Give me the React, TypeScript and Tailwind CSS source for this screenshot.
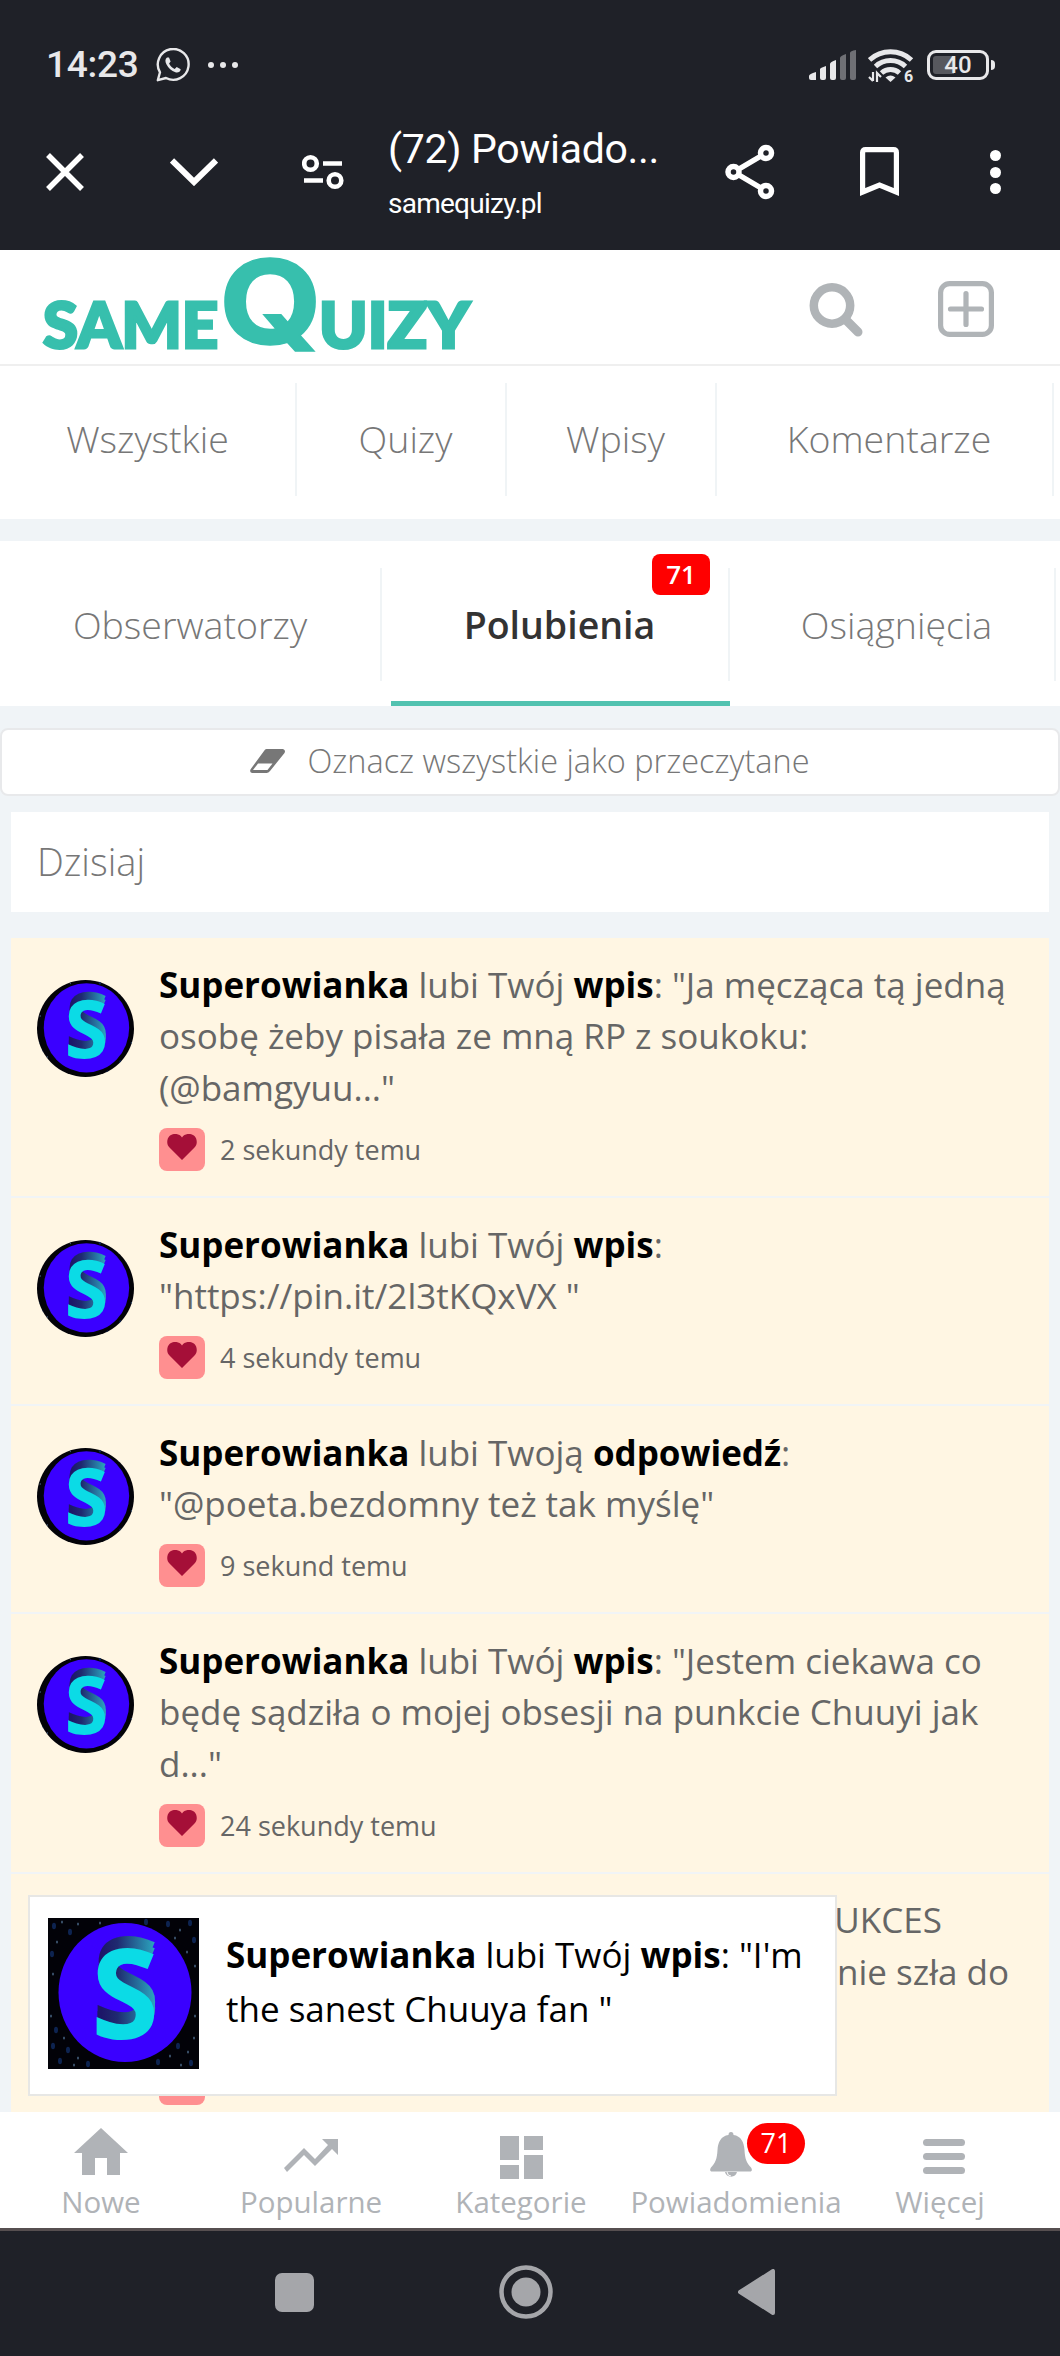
import { useId } from "react";
import type { ReactNode } from "react";

type Notification = {
    id: number;
    verb: string;
    target: string;
    lines: string[];
    time: string;
};

const notifications: Notification[] = [
    { id: 1, verb: "lubi Twój", target: "wpis", lines: ["\"Ja męcząca tą jedną", "osobę żeby pisała ze mną RP z soukoku:", "(@bamgyuu...\""], time: "2 sekundy temu" },
    { id: 2, verb: "lubi Twój", target: "wpis", lines: ["", "\"https://pin.it/2l3tKQxVX \""], time: "4 sekundy temu" },
    { id: 3, verb: "lubi Twoją", target: "odpowiedź", lines: ["", "\"@poeta.bezdomny też tak myślę\""], time: "9 sekund temu" },
    { id: 4, verb: "lubi Twój", target: "wpis", lines: ["\"Jestem ciekawa co", "będę sądziła o mojej obsesji na punkcie Chuuyi jak", "d...\""], time: "24 sekundy temu" },
];

// star field behind the avatar: x, y, size
const stars = [
    [6, 8, 2], [14, 4, 1], [22, 14, 2], [30, 6, 1], [9, 24, 1], [4, 36, 2], [120, 6, 2], [132, 12, 1], [142, 5, 2],
    [127, 20, 1], [146, 22, 2], [139, 34, 1], [147, 48, 1], [5, 56, 1], [3, 98, 1], [8, 112, 2], [16, 120, 1],
    [5, 128, 2], [20, 132, 2], [12, 143, 2], [30, 140, 1], [40, 146, 2], [26, 147, 1], [110, 144, 2], [122, 138, 1],
    [130, 128, 2], [140, 134, 1], [146, 120, 1], [143, 145, 2], [133, 147, 1], [147, 98, 1], [52, 5, 1], [98, 4, 2],
];

function Avatar({ className }: { className: string }) {
    const id = useId();
    return (
        <svg viewBox="0 0 151 151" className={className} fontFamily="Open Sans, sans-serif" fontWeight="700" fontSize="125">
            <defs>
                <linearGradient id={`${id}fade`} x1="0" x2="1" y1="0" y2="0">
                    <stop offset="0.1" stopColor="#1d1668" />
                    <stop offset="0.35" stopColor="#1f2a70" />
                    <stop offset="1" stopColor="#2cb4c8" />
                </linearGradient>
                <mask id={`${id}depth`}>
                    <text x="44" y="109" textLength="68" lengthAdjust="spacingAndGlyphs" fill="#fff">S</text>
                    <text x="44" y="115" textLength="68" lengthAdjust="spacingAndGlyphs" fill="#fff">S</text>
                </mask>
            </defs>
            <rect width="151" height="151" fill="#020208" />
            {stars.map(([x, y, r]) => (
                <ellipse key={`${x}-${y}`} cx={x} cy={y} rx={r} ry={r * 1.6} fill={r === 2 ? "#0d2350" : "#3d5570"} />
            ))}
            <ellipse cx="77" cy="74.5" rx="66.5" ry="69.5" fill="#3a00ff" />
            <rect x="47" y="10" width="64" height="110" fill={`url(#${id}fade)`} mask={`url(#${id}depth)`} />
            <text x="43" y="121" textLength="68" lengthAdjust="spacingAndGlyphs" fill="#0bdbe6">S</text>
        </svg>
    );
}

function StatusBar() {
    return (
        <div className="flex h-[130px] items-center pl-[46px] pr-[65px] text-[#e8e8ea]">
            <span className="font-['Roboto'] text-[37px] font-medium leading-[44px] tracking-[-0.3px]">14:23</span>
            <svg viewBox="0 0 34 34" className="ml-[18px] h-[34px] w-[34px]" fill="none" stroke="currentColor" strokeWidth="2.4">
                <path d="M1.8 32.2 4 24.3A15.4 15.4 0 1 1 10 30Z" strokeLinejoin="round" />
                <path d="M11 9.5c-2 1.5-2 4-.6 6.800 2 4 5 6.800 9 8 2.500.8 5-.4 5.300-3l-4-2.300-2 2c-2.500-1-4.500-3-5.600-5.500l1.500-2-1.600-4Z" fill="currentColor" stroke="none" />
            </svg>
            <div className="ml-[18px] flex gap-1.5">
                <i className="h-1.5 w-1.5 rounded-full bg-current" />
                <i className="h-1.5 w-1.5 rounded-full bg-current" />
                <i className="h-1.5 w-1.5 rounded-full bg-current" />
            </div>
            <svg viewBox="0 0 48 31" className="ml-auto h-[31px] w-[48px]" fill="currentColor">
                <path d="M0 26q0-2 7-4v8H2q-2 0-2-2Z" />
                <path d="M11 19q0-1 6-3v12q0 2-2 2h-2q-2 0-2-2Z" />
                <path d="M21 14q0-2 6-4v18q0 2-2 2h-2q-2 0-2-2Z" />
                <path d="M31 8q0-2 6-4v24q0 2-2 2h-2q-2 0-2-2Z" fill="#6f7075" />
                <path d="M41 3q0-2 6-3v28q0 2-2 2h-2q-2 0-2-2Z" fill="#6f7075" />
            </svg>
            <svg viewBox="0 0 46 36" className="ml-[11px] h-[36px] w-[46px]" fill="none" stroke="currentColor" strokeWidth="5">
                <path d="M1.500 13a31 31 0 0 1 42 0" />
                <path d="M7.500 19.500a22 22 0 0 1 30 0" />
                <path d="M13.500 26a13.500 13.500 0 0 1 18 0" />
                <path d="M17.500 30.500q5-4 10 0l-5 4.500Z" fill="currentColor" stroke="none" />
                <path d="M5 25v9M1 30l4 4M9 35v-9l4 4" strokeWidth="2.200" />
                <text x="36" y="35" fill="currentColor" stroke="none" fontFamily="Roboto" fontWeight="700" fontSize="16">6</text>
            </svg>
            <div className="ml-[13px] flex h-[30px] w-[62px] items-center justify-center rounded-[9px] border-[3px] border-current bg-[linear-gradient(90deg,#57585e_21px,transparent_21px)] bg-clip-content bg-origin-content p-[3px]">
                <span className="font-['Roboto'] text-[24px] font-medium leading-[20px]">40</span>
            </div>
            <i className="ml-0.5 h-[10px] w-1 rounded-r-sm bg-current" />
        </div>
    );
}

function BrowserBar() {
    return (
        <div className="flex h-[120px] pl-[46px] pr-[55px] text-white">
            <svg viewBox="0 0 38 38" className="mt-[23px] h-[38px] w-[38px]" fill="none" stroke="currentColor" strokeWidth="5.500">
                <path d="M2 2l34 34M36 2 2 36" />
            </svg>
            <svg viewBox="0 0 48 28" className="ml-[86px] mt-[28px] h-[28px] w-[48px]" fill="none" stroke="currentColor" strokeWidth="6">
                <path d="M2 2.500 24 24 46 2.500" />
            </svg>
            <svg viewBox="0 0 42 36" className="ml-[84px] mt-[24px] h-[36px] w-[42px]" fill="none" stroke="currentColor" strokeWidth="4.600">
                <circle cx="8.500" cy="9.500" r="6.300" />
                <circle cx="33" cy="26.500" r="6.300" />
                <path d="M21 9.500h19M2 26.500h19" />
            </svg>
            <div className="ml-[44px] flex w-[290px] flex-col whitespace-nowrap font-['Roboto']">
                <span className="mt-[-6px] text-[41px] leading-[50px] tracking-[-0.3px]">(72) Powiado...</span>
                <span className="mt-[12px] text-[28px] leading-[36px] tracking-[-0.75px]">samequizy.pl</span>
            </div>
            <svg viewBox="0 0 50 56" className="ml-[47px] mt-[14px] h-[56px] w-[50px]" fill="none" stroke="currentColor" strokeWidth="5.500">
                <circle cx="8.500" cy="28" r="5.500" />
                <circle cx="41" cy="9" r="5.500" />
                <circle cx="41" cy="47" r="5.500" />
                <path d="m14 25 22-13M14 31l22 13" />
            </svg>
            <svg viewBox="0 0 39 50" className="ml-[85px] mt-[17px] h-[50px] w-[39px]" fill="none" stroke="currentColor" strokeWidth="5.200">
                <path d="M2.600 45V5.500Q2.600 2.600 5.500 2.600h28q2.900 0 2.900 2.900V45L19.500 38Z" />
            </svg>
            <div className="ml-[91px] mt-[20px] flex flex-col gap-[5.500px]">
                <i className="h-[11px] w-[11px] rounded-full bg-white" />
                <i className="h-[11px] w-[11px] rounded-full bg-white" />
                <i className="h-[11px] w-[11px] rounded-full bg-white" />
            </div>
        </div>
    );
}

function SiteHeader() {
    return (
        <header className="flex h-[116px] border-b-2 border-[#efefef] bg-white">
            <svg viewBox="0 0 480 113" className="h-[113px] w-[480px] overflow-visible" fill="#37bfad" stroke="#37bfad" fontFamily="Lato, sans-serif" fontWeight="900">
                <text x="43" y="98" fontSize="62" strokeWidth="3" textLength="175" lengthAdjust="spacingAndGlyphs">SAME</text>
                <text x="219" y="94" fontSize="117" strokeWidth="1.500" fontFamily="Inter, sans-serif" fontWeight="700" textLength="103" lengthAdjust="spacingAndGlyphs">Q</text>
                <text x="319" y="98" fontSize="62" strokeWidth="3" textLength="151" lengthAdjust="spacingAndGlyphs">UIZY</text>
            </svg>
            <svg viewBox="0 0 54 54" className="ml-[329px] mt-[33px] h-[54px] w-[54px]" fill="none" stroke="#b0b4b7" strokeWidth="8.500">
                <circle cx="23" cy="22.500" r="18.200" />
                <path d="m37 37 12 12" strokeLinecap="round" strokeWidth="9" />
            </svg>
            <svg viewBox="0 0 56 56" className="ml-[75px] mt-[31px] h-[56px] w-[56px]" fill="none" stroke="#b0b4b7" strokeWidth="5.200">
                <rect x="2.600" y="2.600" width="50.800" height="50.800" rx="9" />
                <path d="M12.500 28h31M28 12.500v31" strokeLinecap="round" />
            </svg>
        </header>
    );
}

function TopTab({ label, className }: { label: string; className: string }) {
    return (
        <div className={`h-[113px] shrink-0 border-r-2 border-[#f0f4f6] text-center text-[37.5px] font-light text-[#777] ${className}`}>
            {label}
        </div>
    );
}

function NotificationRow({ item }: { item: Notification }) {
    return (
        <li className="flex border-b-2 border-[#f1f4f6] pb-[24.75px] pl-[26px] pt-[21px]">
            <Avatar className="mt-[21px] h-[97px] w-[97px] rounded-full" />
            <div className="ml-[25px]">
                <p className="whitespace-nowrap text-[35px] leading-[51.25px] text-[#666]">
                    <b className="text-black">Superowianka</b> {item.verb} <b className="text-black">{item.target}</b>:{" "}
                    {item.lines.map((line, i) => (
                        <span key={i}>{i > 0 && <br />}{line}</span>
                    ))}
                </p>
                <div className="mt-[15px] flex h-[43px] items-center">
                    <HeartBox />
                    <span className="ml-[15px] text-[27px] leading-[37px] text-[#666]">{item.time}</span>
                </div>
            </div>
        </li>
    );
}

function HeartBox() {
    return (
        <span className="flex h-[43px] w-[46px] justify-center rounded-lg bg-[#ff8f90] pt-[6px]">
            <svg viewBox="0 0 30 26" className="h-[26px] w-[30px]" fill="#a50f38">
                <path d="M15 26 2.500 13.500C-1 10 0 4.500 2.500 2 6-1 12-1 15 3.500 18-1 24-1 27.500 2 30 4.500 31 10 27.500 13.500Z" />
            </svg>
        </span>
    );
}

function NavItem({ label, children }: { label: string; children: ReactNode }) {
    return (
        <div className="flex flex-col items-center">
            <div className="flex h-[70px] w-full justify-center">{children}</div>
            <span className="text-[29.5px] leading-[40px]">{label}</span>
        </div>
    );
}

export default function App() {
    return (
        <div className="h-[2356px] w-[1060px] overflow-hidden bg-[#f0f4f7] font-['Open_Sans',sans-serif]">
            <div className="h-[250px] bg-[#1f2128]">
                <StatusBar />
                <BrowserBar />
            </div>

            <SiteHeader />

            <nav className="flex h-[153px] gap-[9px] bg-white pt-[17px]">
                <TopTab label="Wszystkie" className="w-[297px] leading-[111px]" />
                <TopTab label="Quizy" className="w-[201px] leading-[111px]" />
                <TopTab label="Wpisy" className="w-[201px] leading-[111px]" />
                <TopTab label="Komentarze" className="w-[328px] leading-[111px]" />
            </nav>

            <nav className="mt-[22px] flex h-[165px] gap-[9px] bg-white pt-[27px]">
                <TopTab label="Obserwatorzy" className="w-[382px] leading-[113px]" />
                <div className="relative h-[138px] w-[339px] shrink-0 border-b-[5px] border-[#52c2b0]">
                    <div className="h-[113px] border-r-2 border-[#f0f4f6] text-center text-[37.5px] font-semibold leading-[113px] text-[#333]">Polubienia</div>
                    <span className="absolute right-[20px] top-[-14px] h-[41px] w-[58px] rounded-lg bg-[#f00] text-center text-[26px] font-semibold leading-[40px] text-white">71</span>
                </div>
                <TopTab label="Osiągnięcia" className="w-[317px] leading-[113px]" />
            </nav>

            <button className="mt-[22px] flex h-[68px] w-full items-center justify-center rounded-lg border-2 border-[#e8e9eb] bg-white pb-[3px] text-[32.5px] font-light text-[#777]">
                <svg viewBox="0 0 35 24" className="mr-[22px] h-[24px] w-[35px]">
                    <path d="M16.500 0H33q3 1 1.500 4L20 22q-1.500 2-3.500 2H2Q-1 23 .8 20L14 2q1-2 2.500-2Z" fill="#777" />
                    <path d="M8 14.500h14.500L17.500 21H3Z" fill="#fff" />
                </svg>
                <span className="leading-[46px]">Oznacz wszystkie jako przeczytane</span>
            </button>

            <main className="mx-[11px] mt-4">
                <h2 className="h-[100px] bg-white pl-[26px] text-[38px] font-light leading-[99px] text-[#777]">Dzisiaj</h2>
                <div className="relative mt-[26px] h-[1174px] overflow-hidden bg-[#fff6e3]">
                    <ul>
                        {notifications.map((item) => (
                            <NotificationRow key={item.id} item={item} />
                        ))}
                        <li className="pl-[148px] pt-[20px]">
                            <p className="whitespace-nowrap pl-[656px] text-[35px] leading-[52px] text-[#666]">
                                SUKCES<br />
                                <span className="pl-[22px]">nie szła do</span>
                            </p>
                            <div className="mt-[64px]"><HeartBox /></div>
                        </li>
                    </ul>
                    <aside className="absolute left-[17px] top-[957px] flex h-[201px] w-[809px] border-2 border-[#e7e7e5] bg-white pl-[18px] pt-[21px]">
                        <Avatar className="h-[151px] w-[151px]" />
                        <p className="ml-[27px] mt-[10px] whitespace-nowrap text-[35px] leading-[54px] text-black">
                            <b>Superowianka</b> lubi Twój <b>wpis</b>: "I'm<br />
                            the sanest Chuuya fan "
                        </p>
                    </aside>
                </div>
            </main>

            <footer className="grid h-[116px] grid-cols-[202px_218px_202px_228px_180px] bg-white text-[#b0b3b7]">
                <NavItem label="Nowe">
                    <svg viewBox="0 0 54 47" className="mt-[16px] h-[47px] w-[54px]" fill="currentColor">
                        <path d="M27 0 54 25H46V47H33V30H21V47H8V25H0Z" />
                    </svg>
                </NavItem>
                <NavItem label="Popularne">
                    <svg viewBox="0 0 54 33" className="mt-[27px] h-[33px] w-[54px]" fill="currentColor">
                        <path d="M38 0H54V16L48 10 31 27 20 16 3 33 0 29 20 9 31 20 44 6Z" />
                    </svg>
                </NavItem>
                <NavItem label="Kategorie">
                    <svg viewBox="0 0 43 43" className="mt-[24px] h-[43px] w-[43px]" fill="currentColor">
                        <path d="M0 0H19V24H0ZM0 29H19V43H0ZM24 0H43V14H24ZM24 19H43V43H24Z" />
                    </svg>
                </NavItem>
                <NavItem label="Powiadomienia">
                    <div className="relative mr-[10px] mt-[20px]">
                        <svg viewBox="0 0 42 46" className="h-[46px] w-[42px]" fill="currentColor">
                            <path d="M21 0q2.500 0 2.500 3C31 4 34 10 34.500 18c.5 9 2 12.500 6.500 17.500 1.500 2 1 4-1 4H2c-2 0-2.500-2-1-4C5.500 30.500 7 27 7.500 18 8 10 11 4 18.500 3Q18.500 0 21 0Z" />
                            <path d="M15 40a6.200 6.200 0 0 0 12 0Z" />
                            <path d="M17 40q.5 4 4 4" fill="none" stroke="#fff" />
                        </svg>
                        <span className="absolute left-[37px] top-[-9px] h-[41px] w-[58px] rounded-full bg-[#f00] text-center text-[27px] leading-[40px] text-white">71</span>
                    </div>
                </NavItem>
                <NavItem label="Więcej">
                    <div className="ml-[8px] mt-[27px] flex flex-col gap-[7px]">
                        <i className="h-[7px] w-[42px] rounded-sm bg-current" />
                        <i className="h-[7px] w-[42px] rounded-sm bg-current" />
                        <i className="h-[7px] w-[42px] rounded-sm bg-current" />
                    </div>
                </NavItem>
            </footer>

            <div className="flex h-[128px] items-center border-t-[3px] border-[#564f50] bg-[#1f2128] pb-[3px] pl-[275px]">
                <i className="h-[39px] w-[39px] rounded-[7px] bg-[#a5a6aa]" />
                <svg viewBox="0 0 54 54" className="ml-[185px] h-[54px] w-[54px]" fill="#a5a6aa">
                    <circle cx="27" cy="27" r="24.500" fill="none" stroke="#a5a6aa" strokeWidth="4.500" />
                    <circle cx="27" cy="27" r="14.500" />
                </svg>
                <svg viewBox="0 0 37 46" className="ml-[185px] h-[46px] w-[37px]" fill="#a5a6aa" stroke="#a5a6aa" strokeWidth="4" strokeLinejoin="round">
                    <path d="M2 23 35 2V44Z" />
                </svg>
            </div>
        </div>
    );
}
